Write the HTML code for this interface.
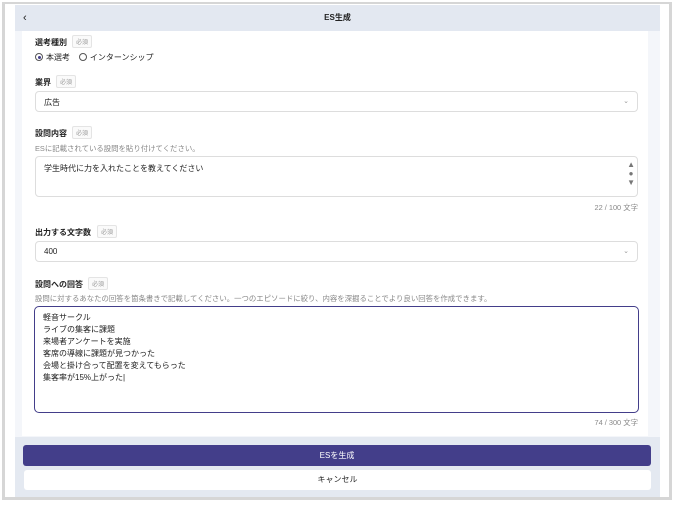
<!DOCTYPE html>
<html><head><meta charset="utf-8"><style>
*{box-sizing:border-box;margin:0;padding:0}
body{width:675px;height:505px;background:#fff;font-family:"Liberation Sans","Noto Sans CJK JP",sans-serif;color:#222;position:relative;overflow:hidden}
.frame{position:absolute;left:2px;top:2px;width:670px;height:498px;border:3px solid #d6d6d6;border-top-width:2px;background:#fff}
.page{position:absolute;left:15px;top:5px;width:645px;height:492px;background:#f4f6fa}
.hdr{position:absolute;left:15px;top:5px;width:645px;height:26px;background:#e3e8f1;font-size:8px;font-weight:bold;text-align:center;line-height:26px}
.hdr .b{position:absolute;left:8px;top:0;font-size:11px;font-weight:normal}
.card{position:absolute;left:22px;top:31px;width:626px;height:405px;background:#fff}
.a{position:absolute;font-size:8px;white-space:nowrap}
.lbl{font-weight:bold;font-size:8px}
.tag{position:absolute;font-size:6px;color:#999;border:1px solid #e4e4e4;border-radius:2px;padding:1px 3px;background:#fafafa}
.box{position:absolute;border:1px solid #ddd;border-radius:4px;background:#fff}
.hint{font-size:7.4px;color:#888}
.chev{position:absolute;right:8px;top:5px;font-size:7px;color:#999}
.foot{position:absolute;left:15px;top:437px;width:645px;height:60px;background:#e4e9f1}
.btn1{position:absolute;left:23px;top:445px;width:628px;height:21px;background:#433e8a;border-radius:3px;color:#fff;font-size:8px;text-align:center;line-height:21px}
.btn2{position:absolute;left:24px;top:470px;width:627px;height:20px;background:#fff;border-radius:3px;font-size:8px;text-align:center;line-height:20px}
.radio{display:inline-block;width:8px;height:8px;border:1px solid #555;border-radius:50%;vertical-align:-1px;margin-right:3px;position:relative}
.radio.on::after{content:"";position:absolute;left:1.5px;top:1.5px;width:3px;height:3px;border-radius:50%;background:#433e8a}
.ta{line-height:12px;font-size:8px}
</style></head><body>
<div class="frame"></div>
<div class="page"></div>
<div class="hdr"><span class="b">‹</span>ES生成</div>
<div class="card"></div>

<div class="a lbl" style="left:35px;top:37px">選考種別</div><div class="tag" style="left:72px;top:35px">必須</div>
<div class="a" style="left:35px;top:52px"><span class="radio on"></span>本選考&nbsp;&nbsp;&nbsp;&nbsp;<span class="radio"></span>インターンシップ</div>

<div class="a lbl" style="left:35px;top:77px">業界</div><div class="tag" style="left:56px;top:75px">必須</div>
<div class="box" style="left:35px;top:91px;width:603px;height:21px"><span class="a" style="left:8px;top:5px">広告</span><span class="chev">⌄</span></div>

<div class="a lbl" style="left:35px;top:128px">設問内容</div><div class="tag" style="left:72px;top:126px">必須</div>
<div class="a hint" style="left:35px;top:143px">ESに記載されている設問を貼り付けてください。</div>
<div class="box" style="left:35px;top:156px;width:603px;height:41px"><span class="a" style="left:8px;top:6px">学生時代に力を入れたことを教えてください</span>
<span class="a" style="right:2px;top:3px;font-size:8px;color:#777;line-height:9px;text-align:center">▲<br>●<br>▼</span></div>
<div class="a hint" style="right:37px;top:202px">22 / 100 文字</div>

<div class="a lbl" style="left:35px;top:227px">出力する文字数</div><div class="tag" style="left:97px;top:225px">必須</div>
<div class="box" style="left:35px;top:241px;width:603px;height:21px"><span class="a" style="left:8px;top:5px">400</span><span class="chev">⌄</span></div>

<div class="a lbl" style="left:35px;top:279px">設問への回答</div><div class="tag" style="left:88px;top:277px">必須</div>
<div class="a hint" style="left:35px;top:293px">設問に対するあなたの回答を箇条書きで記載してください。一つのエピソードに絞り、内容を深掘ることでより良い回答を作成できます。</div>
<div class="box" style="left:34px;top:306px;width:605px;height:107px;border:1.5px solid #433e8a;border-radius:5px"><div class="a ta" style="left:8px;top:5px">軽音サークル<br>ライブの集客に課題<br>来場者アンケートを実施<br>客席の導線に課題が見つかった<br>会場と掛け合って配置を変えてもらった<br>集客率が15%上がった|</div></div>
<div class="a hint" style="right:37px;top:417px">74 / 300 文字</div>

<div class="foot"></div>
<div class="btn1">ESを生成</div>
<div class="btn2">キャンセル</div>
</body></html>
